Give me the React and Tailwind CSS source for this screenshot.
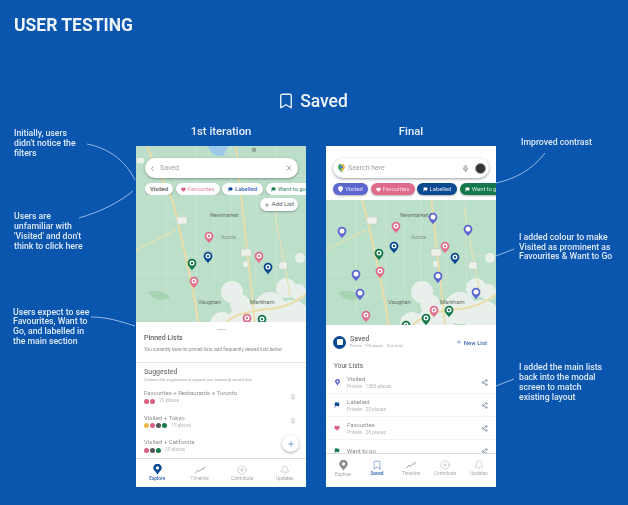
import { Bookmark, Bell, ChevronLeft, CirclePlus, Flag, Heart, Mic, Pin, Plus, Share2, X } from "lucide-react";

const FONT = "font-['Roboto',sans-serif]";

const PIN_COLORS = {
  pink: "#df6f8d",
  navy: "#0b4a92",
  green: "#14794a",
  blue: "#5c66cf",
};

const FIRST_PINS = [
  ["pink", 73, 91],
  ["navy", 72, 111],
  ["green", 56, 118],
  ["pink", 123, 111],
  ["navy", 132, 122],
  ["pink", 58, 136],
  ["pink", 111, 173],
  ["green", 126, 174],
];

const FINAL_PINS = [
  ["blue", 16, 86],
  ["blue", 107, 72],
  ["blue", 142, 84],
  ["blue", 30, 129],
  ["blue", 112, 131],
  ["blue", 34, 148],
  ["blue", 150, 147],
  ["pink", 70, 81],
  ["pink", 119, 101],
  ["pink", 54, 126],
  ["pink", 40, 170],
  ["pink", 108, 165],
  ["navy", 68, 101],
  ["navy", 129, 112],
  ["green", 53, 108],
  ["green", 123, 165],
  ["green", 100, 173],
  ["green", 80, 180],
];

function MapPinMark({ color, x, y }) {
  return (
    <g transform={`translate(${x} ${y})`}>
      <path d="M0 6.5C-1 4.3-4.4 2.6-4.4-.9a4.4 4.4 0 0 1 8.8 0C4.4 2.6 1 4.3 0 6.5Z" fill={PIN_COLORS[color]} />
      <circle cx="0" cy="-0.9" r="2.5" fill="#ffffff" />
      {color !== "blue" && <circle cx="0" cy="-0.9" r="1.2" fill={PIN_COLORS[color]} />}
    </g>
  );
}

// same map behind both phones, the final one just starts lower
function MapArea({ pins, top, height }) {
  return (
    <svg className="block w-[170px]" style={{ height }} viewBox={`0 ${top} 170 ${height}`}>
      <rect x="0" y="0" width="170" height="190" fill="#bcdfc9" />
      <path d="M72 0C74 8 82 12 88 9L92 0Z" fill="#9cc8ea" />
      <circle cx="118" cy="4" r="2.4" fill="#8fa396" />
      <path d="M0 30H170M0 70H170M30 110H170M20 150H90M60 0V180M95 0V140M140 0V150M120 40V140M30 40V170M78 60V140M0 128H60" stroke="#cde6d5" strokeWidth="0.8" fill="none" />
      <path d="M12 146C20 142 30 146 34 152C26 156 16 154 12 146Z" fill="#a9d3b5" />
      <g fill="#e9f0ec">
        <circle cx="96" cy="146" r="11" />
        <circle cx="104" cy="158" r="10" />
        <circle cx="150" cy="142" r="10" />
        <circle cx="162" cy="146" r="8" />
        <circle cx="134" cy="162" r="16" />
        <circle cx="110" cy="176" r="18" />
        <circle cx="86" cy="178" r="12" />
        <circle cx="156" cy="172" r="18" />
        <circle cx="110" cy="118" r="3" />
        <circle cx="164" cy="112" r="5" />
      </g>
      <path d="M11 0C18 20 32 40 38 60C46 95 58 140 64 190" stroke="#ecdca8" strokeWidth="2" fill="none" />
      <path d="M100 0C104 40 108 80 114 130C116 150 118 170 120 190" stroke="#ecdca8" strokeWidth="1.8" fill="none" />
      <path d="M138 60C142 90 150 120 154 150" stroke="#e3e2b4" strokeWidth="1.3" fill="none" />
      <path d="M0 104L40 84" stroke="#e3e2b4" strokeWidth="1.3" fill="none" />
      <path d="M80 190C90 165 120 165 140 162C150 160 162 155 170 148" stroke="#ecdca8" strokeWidth="2" fill="none" />
      <rect x="1" y="12" width="7" height="5" rx="1" fill="#eef0ea" />
      <rect x="41" y="71" width="10" height="7" rx="1.5" fill="#eef0ea" stroke="#b5bdb5" strokeWidth="0.3" />
      <rect x="105" y="103" width="10" height="7" rx="1.5" fill="#eef0ea" stroke="#b5bdb5" strokeWidth="0.3" />
      <rect x="143" y="116" width="8" height="7" rx="1.5" fill="#eef0ea" stroke="#b5bdb5" strokeWidth="0.3" />
      <text x="74" y="71" fontSize="5.6" fill="#5f6f66" fontFamily="Roboto">Newmarket</text>
      <text x="85" y="93" fontSize="5" fill="#7f9488" fontFamily="Roboto">Aurora</text>
      <text x="62" y="158" fontSize="5.8" fill="#5f6f66" fontFamily="Roboto">Vaughan</text>
      <text x="114" y="158" fontSize="5.8" fill="#5f6f66" fontFamily="Roboto">Markham</text>
      {pins.map(([color, x, y], i) => (
        <MapPinMark key={i} color={color} x={x} y={y} />
      ))}
    </svg>
  );
}

function Chip({ bg, text, icon, label, bold, width }) {
  return (
    <div className={`flex h-[12px] shrink-0 items-center justify-center gap-[2px] rounded-full text-[5.8px] shadow-[0_1px_2px_rgba(0,0,0,0.3)] ${width} ${bg} ${text} ${bold ? "font-medium" : ""}`}>
      {icon}
      <span className="whitespace-nowrap">{label}</span>
    </div>
  );
}

function SmallPin({ className }) {
  return (
    <svg className={className} viewBox="0 0 10 13">
      <path d="M5 13C4 9.5 0 7.5 0 4.6a5 5 0 0 1 10 0C10 7.5 6 9.5 5 13Z" fill="currentColor" />
      <circle cx="5" cy="4.6" r="1.9" fill="#ffffff" />
    </svg>
  );
}

function NavItem({ icon, label, active }) {
  return (
    <div className={`flex w-[34px] flex-col items-center gap-[1px] text-[4.8px] leading-[6px] ${active ? "font-medium text-[#2c62ad]" : "text-[#a9a9a9]"}`}>
      {icon}
      <span className="whitespace-nowrap">{label}</span>
    </div>
  );
}

const trendIcon = (
  <svg className="h-[10px] w-[12px] text-[#9a9a9a]" viewBox="0 0 12 10" fill="none" stroke="currentColor" strokeWidth="0.9">
    <path d="M1 8.5L4 5l1.5 1.5L8 3.5l1 1L11 1.5" />
  </svg>
);

function SuggestRow({ title, meta, marks, hidePin }) {
  return (
    <div className="mt-[4.5px] flex h-[20px] items-center justify-between">
      <div>
        <div className="whitespace-nowrap text-[6px] leading-[8px] text-[#8f8f8f]">{title}</div>
        <div className="mt-[1px] flex items-center gap-[1px] text-[4.6px] leading-[6px] text-[#b5b5b5]">
          {marks.map((c, i) => (
            <span key={i} className="h-[5px] w-[5px] rounded-full" style={{ backgroundColor: c }} />
          ))}
          <span className="ml-[1px]">{meta}</span>
        </div>
      </div>
      {!hidePin && <Pin size={6} className="mr-[2px] text-[#a8a8a8]" />}
    </div>
  );
}

function FirstPhone() {
  return (
    <div className="relative h-[341px] w-[170px] overflow-hidden bg-white">
      <MapArea pins={FIRST_PINS} top={0} height={176} />
      <div className="absolute left-[9px] top-[12px] flex h-[20px] w-[153px] items-center rounded-full bg-white pl-[3px] pr-[5px] text-[7px] text-[#a8a8a8] shadow-[0_1px_3px_rgba(0,0,0,0.35)]">
        <ChevronLeft size={9} className="text-[#888888]" />
        <span className="ml-[3px] flex-1">Saved</span>
        <X size={8} className="text-[#777777]" />
      </div>
      <div className="absolute left-[9px] top-[37px] flex w-[161px] gap-[2.5px] overflow-hidden">
        <Chip width="w-[28px]" bg="bg-white" text="text-[#555555]" label="Visited" bold />
        <Chip width="w-[44px]" bg="bg-white" text="text-[#e58ca2]" label="Favourites" icon={<Heart size={5} fill="#d9607f" stroke="#d9607f" />} />
        <Chip width="w-[41px]" bg="bg-white" text="text-[#3d66b4]" label="Labelled" bold icon={<Flag size={5} fill="#0b4a92" stroke="#0b4a92" />} />
        <Chip width="w-[46px]" bg="bg-white" text="text-[#2f8a5f]" label="Want to go" icon={<Flag size={5} fill="#14794a" stroke="#14794a" />} />
      </div>
      <div className="absolute right-[8px] top-[52px] flex h-[13px] items-center gap-[1px] rounded-full bg-white px-[4px] text-[6.2px] text-[#555555] shadow-[0_1px_2px_rgba(0,0,0,0.3)]">
        <Plus size={6} />
        Add List
      </div>

      <div className="flex justify-center pt-[7px]">
        <div className="h-[1px] w-[9px] bg-[#d0d0d0]" />
      </div>
      <div className="px-[8px] pt-[4px]">
        <div className="text-[7px] font-medium leading-[9px] text-[#666666]">Pinned Lists</div>
        <div className="mt-[4px] whitespace-nowrap text-[4.6px] leading-[6px] text-[#8a8a8a]">You currently have no pinned lists, add frequently viewed lists below</div>
      </div>
      <div className="mt-[9px] h-[1px] bg-[#e9e9e9]" />
      <div className="px-[8px] pt-[5px]">
        <div className="text-[7px] font-medium leading-[9px] text-[#777777]">Suggested</div>
        <div className="whitespace-nowrap text-[3.8px] leading-[5px] text-[#a5a5a5]">Content tells suggestions to support your frequently viewed lists</div>
        <SuggestRow title="Favourites + Restaurants + Toronto" meta="· 29 places" marks={["#d9607f", "#d9607f"]} />
        <SuggestRow title="Visited + Tokyo" meta="· 15 places" marks={["#eeb94a", "#d9607f", "#555555", "#14794a"]} />
        <SuggestRow title="Visited + California" meta="· 20 places" marks={["#d9607f", "#555555", "#14794a"]} hidePin />
      </div>
      <div className="absolute bottom-0 left-0 right-0 flex h-[29px] items-center justify-around border-t border-[#dddddd] bg-white">
        <NavItem active label="Explore" icon={<SmallPin className="h-[11px] w-[9px] text-[#0b4a92]" />} />
        <NavItem label="Timeline" icon={trendIcon} />
        <NavItem label="Contribute" icon={<CirclePlus size={10} strokeWidth={1} className="text-[#9a9a9a]" />} />
        <NavItem label="Updates" icon={<Bell size={10} strokeWidth={1} className="text-[#9a9a9a]" />} />
      </div>
      <div className="absolute bottom-[35px] right-[7px] flex h-[17px] w-[17px] items-center justify-center rounded-full bg-white text-[#2c62ad] shadow-[0_1px_3px_rgba(0,0,0,0.35)]">
        <Plus size={8} strokeWidth={1.6} />
      </div>
    </div>
  );
}

function ListRow({ icon, title, sub }) {
  return (
    <div className="flex h-[23px] items-center border-b border-[#f3f3f3] pr-[8px]">
      <div className="flex w-[18px] justify-center pl-[2px]">{icon}</div>
      <div className="ml-[2px] flex-1">
        <div className="text-[6px] leading-[8px] text-[#8a8a8a]">{title}</div>
        <div className="text-[4.8px] leading-[7px] text-[#b5b5b5]">{sub}</div>
      </div>
      <Share2 size={7} className="text-[#6d7f97]" />
    </div>
  );
}

function FinalPhone() {
  return (
    <div className="relative h-[341px] w-[170px] overflow-hidden bg-white">
      <div className="h-[54px] px-[7px] pt-[12px]">
        <div className="flex h-[20px] items-center rounded-full bg-white pl-[5px] pr-[3px] text-[7px] text-[#a2a2a2] shadow-[0_1px_3px_rgba(0,0,0,0.4)]">
          <svg className="h-[9px] w-[7px]" viewBox="0 0 10 13">
            <path d="M5 13C4 9.5 0 7.5 0 4.6A5 5 0 0 1 5-.4V13Z" fill="#3fa35f" />
            <path d="M5 13C6 9.5 10 7.5 10 4.6A5 5 0 0 0 5-.4V13Z" fill="#e8b93c" />
            <circle cx="5" cy="4.6" r="2" fill="#4a7fe0" />
          </svg>
          <span className="ml-[3px] flex-1">Search here</span>
          <Mic size={7} className="mr-[6px] text-[#666666]" />
          <span className="h-[11px] w-[11px] rounded-full border border-[#999999] bg-[#333333]" />
        </div>
        <div className="mt-[5px] flex w-[170px] gap-[2.5px]">
          <Chip width="w-[35px]" bg="bg-[#5c66cf]" text="text-[#dfe3fb]" label="Visited" icon={<SmallPin className="h-[7px] w-[5px] text-white" />} />
          <Chip width="w-[44px]" bg="bg-[#df6b8c]" text="text-[#fbdbe4]" label="Favourites" icon={<Heart size={5} fill="#ffffff" stroke="#ffffff" />} />
          <Chip width="w-[40px]" bg="bg-[#0b4a92]" text="text-[#dce8f7]" label="Labelled" icon={<Flag size={5} fill="#ffffff" stroke="#ffffff" />} />
          <Chip width="w-[46px]" bg="bg-[#14794a]" text="text-[#d7efe2]" label="Want to go" icon={<Flag size={5} fill="#ffffff" stroke="#ffffff" />} />
        </div>
      </div>
      <MapArea pins={FINAL_PINS} top={54} height={125} />

      <div className="flex items-center px-[7px] pt-[10px]">
        <div className="flex h-[13px] w-[13px] items-center justify-center rounded-full bg-[#0b4a92]">
          <div className="h-[6px] w-[6px] rounded-[1px] bg-white" />
        </div>
        <div className="ml-[4px] flex-1">
          <div className="text-[7px] font-medium leading-[8px] text-[#6a6a6a]">Saved</div>
          <div className="whitespace-nowrap text-[3.8px] leading-[6px] text-[#a8a8a8]">Private · 150 places · 10 in total</div>
        </div>
        <div className="flex items-center gap-[2px] pr-[2px] text-[6px] font-medium text-[#3d66b4]">
          <Plus size={6} />
          New List
        </div>
      </div>
      <div className="px-[8px] pt-[13px] text-[6.5px] font-medium leading-[8px] text-[#777777]">Your Lists</div>
      <div className="mt-[1px] pl-[1px]">
        <ListRow icon={<SmallPin className="h-[7px] w-[5px] text-[#5c66cf]" />} title="Visited" sub="Private · 1305 places" />
        <ListRow icon={<Flag size={6} fill="#0b4a92" stroke="#0b4a92" />} title="Labelled" sub="Private · 23 places" />
        <ListRow icon={<Heart size={6} fill="#d9607f" stroke="#d9607f" />} title="Favourites" sub="Private · 28 places" />
        <ListRow icon={<Flag size={6} fill="#14794a" stroke="#14794a" />} title="Want to go" sub="" />
      </div>
      <div className="absolute bottom-0 left-0 right-0 flex h-[34px] items-start justify-around border-t border-[#dddddd] bg-white pt-[6px]">
        <NavItem label="Explore" icon={<SmallPin className="h-[11px] w-[9px] text-[#8a8a8a]" />} />
        <NavItem active label="Saved" icon={<Bookmark size={10} strokeWidth={1.2} className="text-[#2c62ad]" />} />
        <NavItem label="Timeline" icon={trendIcon} />
        <NavItem label="Contribute" icon={<CirclePlus size={10} strokeWidth={1} className="text-[#9a9a9a]" />} />
        <NavItem label="Updates" icon={<Bell size={10} strokeWidth={1} className="text-[#9a9a9a]" />} />
      </div>
    </div>
  );
}

function Note({ className, children }) {
  return <p className={`text-[8.7px] font-medium leading-[9.8px] text-[#dfeaf8] ${className}`}>{children}</p>;
}

export default function App() {
  return (
    <div className={`relative h-[505px] w-[628px] overflow-hidden bg-[#0a55ae] ${FONT}`}>
      <div className="blur-[0.45px]">
        <h1 className="pl-[14px] pt-[16px] text-[17.5px] font-bold leading-[19px] text-[#eef4fb]">USER TESTING</h1>
        <div className="mt-[56px] flex items-center justify-center gap-[5px] pr-[3px] text-[17.5px] font-medium leading-[20px] text-[#eef4fb]">
          <Bookmark size={18} strokeWidth={1.8} />
          Saved
        </div>

        <div className="mt-[15px] flex">
          <div className="w-[136px] pl-[14px] pt-[3px]">
            <Note>
              Initially, users
              <br />
              didn't notice the
              <br />
              filters
            </Note>
            <Note className="mt-[54px]">
              Users are
              <br />
              unfamiliar with
              <br />
              'Visited' and don't
              <br />
              think to click here
            </Note>
            <Note className="-ml-[1px] mt-[56px]">
              Users expect to see
              <br />
              Favourites, Want to
              <br />
              Go, and labelled in
              <br />
              the main section
            </Note>
          </div>

          <div className="w-[170px]">
            <div className="h-[20px] text-center text-[11.3px] font-medium leading-[12px] text-[#e6eef9]">1st iteration</div>
            <FirstPhone />
          </div>

          <div className="ml-[20px] w-[170px]">
            <div className="h-[20px] text-center text-[11.3px] font-medium leading-[12px] text-[#e6eef9]">Final</div>
            <FinalPhone />
          </div>

          <div className="w-[132px] pl-[23px] pt-[12px]">
            <Note className="ml-[2px]">Improved contrast</Note>
            <Note className="mt-[85px] whitespace-nowrap">
              I added colour to make
              <br />
              Visited as prominent as
              <br />
              Favourites & Want to Go
            </Note>
            <Note className="mt-[101px] whitespace-nowrap">
              I added the main lists
              <br />
              back into the modal
              <br />
              screen to match
              <br />
              existing layout
            </Note>
          </div>
        </div>
      </div>

      {/* connector lines between the notes and the phones */}
      <svg className="pointer-events-none absolute left-0 top-0 h-[505px] w-[628px]" viewBox="0 0 628 505" fill="none" stroke="#b9d2ee" strokeWidth="0.8">
        <path d="M87 144C108 148 125 160 135 180" />
        <path d="M79 218C100 212 120 202 133 191" />
        <path d="M91 317C108 317 122 322 135 326" />
        <path d="M545 153C532 170 515 179 496 183" />
        <path d="M514 249L496 256" />
        <path d="M514 379L496 386" />
      </svg>
    </div>
  );
}
